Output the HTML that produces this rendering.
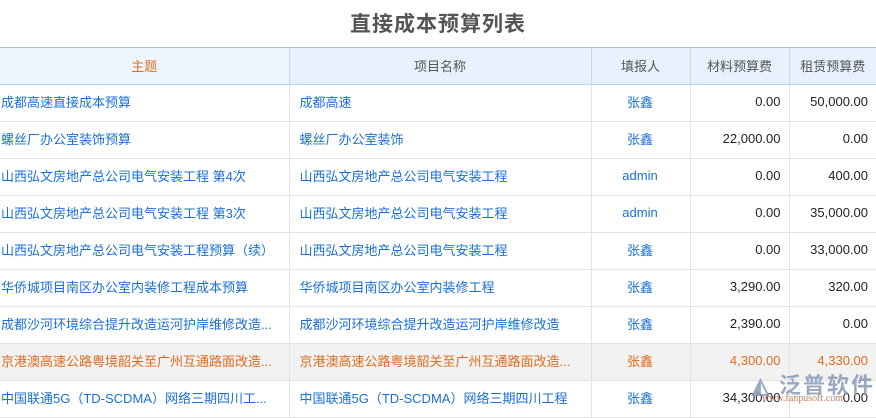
<!DOCTYPE html>
<html><head><meta charset="utf-8"><style>
body{margin:0;width:876px;height:416px;overflow:hidden;background:#fff;font-family:"Liberation Sans","Noto Sans CJK SC",sans-serif;font-size:13px;}
h1{position:absolute;top:8px;left:0;width:876px;margin:0;text-align:center;font-size:21px;font-weight:bold;color:#555;letter-spacing:1px}
table{position:absolute;top:47px;left:0;border-collapse:collapse;table-layout:fixed;width:876px}
th{height:34px;padding:0 0 2px 0;background:#e6f1fc;color:#555;font-weight:normal;border-top:1px solid #9cc3e8;border-bottom:1px solid #b8d3ee;border-left:1px solid #c5daf0;font-size:13px}
th:first-child{color:#e07020;background:#edf6fe;border-left:none}
td{height:32px;padding:0 2px 4px 1px;border-bottom:1px solid #e3e3e3;border-left:1px solid #e3e3e3;color:#1a6fd6;white-space:nowrap;overflow:hidden}
td:first-child{border-left:none}
td:nth-child(2){padding-left:10px}
td.c{text-align:center}td.r{text-align:right;color:#222;padding-right:8px}
tr.h td{background:#f2f2f2;color:#e06a1c}
tr.h td.r{color:#e06a1c}
.wm{position:absolute;left:752px;top:368px;color:#8a9ab8;font-size:22px;font-weight:bold;letter-spacing:2px;opacity:.85}
.wm2{position:absolute;left:762px;top:393px;color:#c08060;font-size:10px;font-family:"Liberation Serif",serif}
</style></head><body>
<h1>直接成本预算列表</h1>
<table>
<colgroup><col style="width:289px"><col style="width:302px"><col style="width:99px"><col style="width:99px"><col style="width:87px"></colgroup>
<tr><th>主题</th><th>项目名称</th><th>填报人</th><th>材料预算费</th><th>租赁预算费</th></tr>
<tr><td>成都高速直接成本预算</td><td>成都高速</td><td class="c">张鑫</td><td class="r">0.00</td><td class="r">50,000.00</td></tr>
<tr><td>螺丝厂办公室装饰预算</td><td>螺丝厂办公室装饰</td><td class="c">张鑫</td><td class="r">22,000.00</td><td class="r">0.00</td></tr>
<tr><td>山西弘文房地产总公司电气安装工程 第4次</td><td>山西弘文房地产总公司电气安装工程</td><td class="c">admin</td><td class="r">0.00</td><td class="r">400.00</td></tr>
<tr><td>山西弘文房地产总公司电气安装工程 第3次</td><td>山西弘文房地产总公司电气安装工程</td><td class="c">admin</td><td class="r">0.00</td><td class="r">35,000.00</td></tr>
<tr><td>山西弘文房地产总公司电气安装工程预算（续）</td><td>山西弘文房地产总公司电气安装工程</td><td class="c">张鑫</td><td class="r">0.00</td><td class="r">33,000.00</td></tr>
<tr><td>华侨城项目南区办公室内装修工程成本预算</td><td>华侨城项目南区办公室内装修工程</td><td class="c">张鑫</td><td class="r">3,290.00</td><td class="r">320.00</td></tr>
<tr><td>成都沙河环境综合提升改造运河护岸维修改造...</td><td>成都沙河环境综合提升改造运河护岸维修改造</td><td class="c">张鑫</td><td class="r">2,390.00</td><td class="r">0.00</td></tr>
<tr class="h"><td>京港澳高速公路粤境韶关至广州互通路面改造...</td><td>京港澳高速公路粤境韶关至广州互通路面改造...</td><td class="c">张鑫</td><td class="r">4,300.00</td><td class="r">4,330.00</td></tr>
<tr><td>中国联通5G（TD-SCDMA）网络三期四川工...</td><td>中国联通5G（TD-SCDMA）网络三期四川工程</td><td class="c">张鑫</td><td class="r">34,300.00</td><td class="r">0.00</td></tr>
</table>
<div class="wm">◭ 泛普软件</div>
<div class="wm2">www.fanpusoft.com</div>
</body></html>
